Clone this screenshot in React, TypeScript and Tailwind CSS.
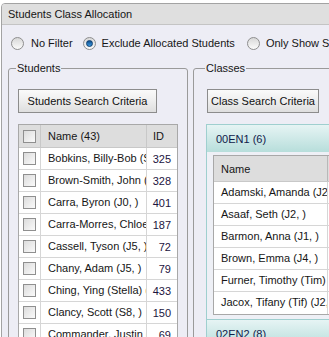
import React from "react";

const students = [
  { name: "Bobkins, Billy-Bob (S3, )", id: 325 },
  { name: "Brown-Smith, John (J3, )", id: 328 },
  { name: "Carra, Byron (J0, )", id: 401 },
  { name: "Carra-Morres, Chloe (J1, )", id: 187 },
  { name: "Cassell, Tyson (J5, )", id: 72 },
  { name: "Chany, Adam (J5, )", id: 79 },
  { name: "Ching, Ying (Stella) (J4, )", id: 433 },
  { name: "Clancy, Scott (S8, )", id: 150 },
  { name: "Commander, Justin (J2, )", id: 69 },
];

const classRows = [
  "Adamski, Amanda (J2, )",
  "Asaaf, Seth (J2, )",
  "Barmon, Anna (J1, )",
  "Brown, Emma (J4, )",
  "Furner, Timothy (Tim) (J3, )",
  "Jacox, Tifany (Tif) (J2, )",
];

function Radio({ checked }: { checked?: boolean }) {
  return (
    <span className="w-[13px] h-[13px] rounded-full border border-[#8e8e8e] bg-gradient-to-b from-[#d8d8d8] to-[#fbfbfb] flex items-center justify-center shrink-0">
      {checked && (
        <span className="w-[7px] h-[7px] rounded-full bg-gradient-to-b from-[#0e4f8f] to-[#3f9be0] border border-[#0b3d6e]" />
      )}
    </span>
  );
}

function Checkbox() {
  return (
    <span className="block w-[13px] h-[13px] border border-[#8f8f8f] bg-gradient-to-br from-[#dcdcdc] to-[#fafafa]" />
  );
}

function Button({ label, width }: { label: string; width: string }) {
  return (
    <div
      className={`${width} h-[24px] border border-[#8c8c8c] bg-gradient-to-b from-[#fafafa] via-[#eeeeee] to-[#dedede] flex items-center justify-center text-[#111] whitespace-nowrap`}
    >
      {label}
    </div>
  );
}

export default function App() {
  return (
    <div className="w-[329px] h-[337px] overflow-hidden bg-white pt-[3px] pl-[1px] text-[11px] leading-[14px] text-[#161616] font-['Liberation_Sans',Arial,sans-serif]">
      <div className="w-[380px] h-[360px] border border-[#a3a3a3] rounded-tl-[4px] bg-[#ededf5] overflow-hidden">
        {/* Title */}
        <div className="h-[21px] bg-[#dfdfdf] border-b border-[#c4c4c4] pl-[6px] flex items-center">
          Students Class Allocation
        </div>

        {/* Filters */}
        <div className="h-[36px] flex items-center pl-[9px] whitespace-nowrap">
          <Radio />
          <span className="ml-[7px] shrink-0">No Filter</span>
          <span className="ml-[10px] shrink-0">
            <Radio checked />
          </span>
          <span className="ml-[6px] shrink-0">Exclude Allocated Students</span>
          <span className="ml-[12px] shrink-0">
            <Radio />
          </span>
          <span className="ml-[6px] shrink-0">Only Show Students</span>
        </div>

        <div className="flex items-start pl-[6px] gap-[5px]">
          {/* Students */}
          <fieldset className="w-[180px] shrink-0 h-[300px] border border-[#9a9a9a] rounded-[3px] px-[9px] pt-[14px]">
            <legend className="ml-[-2px] px-[1px]">Students</legend>
            <Button label="Students Search Criteria" width="w-[139px]" />
            <div className="mt-[11px] w-[160px] border border-[#a8a8a8] bg-white">
              <div className="flex h-[23px] bg-[#dddddd] border-b border-[#c8c8c8]">
                <div className="w-[22px] border-r border-[#c8c8c8] flex items-center justify-center">
                  <Checkbox />
                </div>
                <div className="w-[106px] border-r border-[#c8c8c8] flex items-center pl-[7px]">
                  Name (43)
                </div>
                <div className="flex-1 flex items-center pl-[6px]">ID</div>
              </div>
              {students.map((s) => (
                <div key={s.id} className="flex h-[22px] border-b border-[#d6d6d6]">
                  <div className="w-[22px] border-r border-[#d6d6d6] flex items-center justify-center">
                    <Checkbox />
                  </div>
                  <div className="w-[106px] border-r border-[#d6d6d6] pl-[7px] overflow-hidden">
                    <div className="leading-[21px] whitespace-nowrap">{s.name}</div>
                  </div>
                  <div className="flex-1 flex items-center justify-end pr-[6px] text-[#1c1440]">
                    {s.id}
                  </div>
                </div>
              ))}
            </div>
          </fieldset>

          {/* Classes */}
          <fieldset className="w-[180px] shrink-0 h-[300px] border border-[#9a9a9a] rounded-[3px] pl-[12px] pt-[14px]">
            <legend className="ml-[-1px] px-[1px]">Classes</legend>
            <div className="ml-[1px]">
              <Button label="Class Search Criteria" width="w-[112px]" />
            </div>
            <div className="mt-[11px] border border-[#9fcfcf] bg-[#eef0f6]">
              <div className="h-[27px] bg-gradient-to-b from-[#e6f4f4] to-[#b7dedb] flex items-center pl-[9px] text-[#10204a]">
                00EN1 (6)
              </div>
              <div className="pt-[3px] pl-[6px] pb-[4px]">
                <div className="border border-[#a8a8a8] bg-white">
                  <div className="flex h-[26px] bg-[#dddddd] border-b border-[#c8c8c8]">
                    <div className="w-[114px] border-r border-[#b8b8b8] flex items-center pl-[7px]">
                      Name
                    </div>
                    <div className="flex-1" />
                  </div>
                  {classRows.map((n, i) => (
                    <div
                      key={n}
                      className={`flex h-[22px] ${i < classRows.length - 1 ? "border-b border-[#d6d6d6]" : ""}`}
                    >
                      <div className="w-[114px] border-r border-[#d6d6d6] pl-[7px] overflow-hidden">
                        <div className="leading-[21px] whitespace-nowrap">{n}</div>
                      </div>
                      <div className="flex-1" />
                    </div>
                  ))}
                </div>
              </div>
            </div>
            <div className="border border-t-0 border-[#9fcfcf]">
              <div className="h-[27px] bg-gradient-to-b from-[#e6f4f4] to-[#b7dedb] flex items-center pl-[9px] text-[#10204a]">
                02EN2 (8)
              </div>
            </div>
          </fieldset>
        </div>
      </div>
    </div>
  );
}
